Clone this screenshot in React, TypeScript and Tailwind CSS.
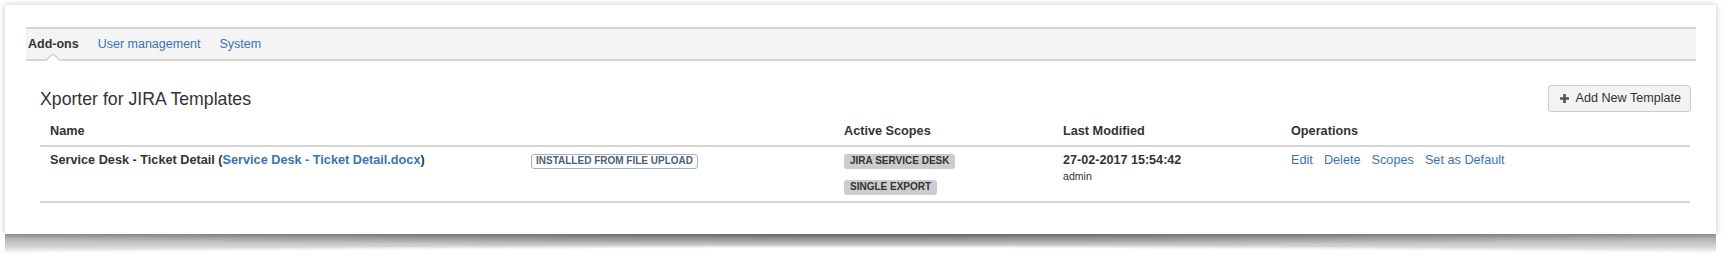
import React from 'react';

const LINK = 'text-[#3b73af]';

const ScopeLozenge = ({ children }: { children: React.ReactNode }) => (
  <div className="flex h-[18px] items-center pt-[2px]">
    <span className="inline-flex h-[15px] items-center rounded-[3px] bg-[#cccccc] px-[6px] text-[10px] font-bold uppercase leading-none text-[#333]">
      {children}
    </span>
  </div>
);

const cols = 'grid grid-cols-[481px_313px_219px_228px_1fr]';

export default function App() {
  return (
    <div className="min-h-screen bg-white pt-[5px] pl-[5px] pr-[14px] font-['Liberation_Sans',Arial,sans-serif] text-[#333]">
      <div className="bg-white pt-[22px] pb-[31px] pl-[21px] pr-[20px] shadow-[0_0_6px_rgba(0,0,0,0.25)]">
        {/* tabs */}
        <div className="relative flex h-[34px] items-center gap-[19px] border-y-2 border-[#d6d6d6] bg-[#f4f4f4] pl-[2px] text-[12.5px]">
          <span className="font-bold text-[#333]">Add-ons</span>
          <span className={LINK}>User management</span>
          <span className={LINK}>System</span>
          <svg className="absolute bottom-[-2px] left-[20px]" width="14" height="8" viewBox="0 0 14 8">
            <polygon points="0.5,8 7,2 13.5,8" fill="#ffffff" />
            <polyline points="0,7 7,1 14,7" fill="none" stroke="#d6d6d6" strokeWidth="1.6" />
          </svg>
        </div>

        <div className="pl-[14px] pr-[5px]">
          <div className="mt-[24px] flex items-center justify-between">
            <h2 className="text-[17.7px] leading-[24px] font-normal text-[#333]">Xporter for JIRA Templates</h2>
            <button
              type="button"
              className="flex h-[27px] items-center gap-[7px] rounded-[3px] border border-[#cccccc] bg-[#f3f3f3] pl-[11px] pr-[9px] text-[12.6px] text-[#333]"
            >
              <svg width="9" height="9" viewBox="0 0 9 9">
                <path d="M3.2 0h2.6v3.2H9v2.6H5.8V9H3.2V5.8H0V3.2h3.2z" fill="#555" />
              </svg>
              Add New Template
            </button>
          </div>

          <div className="mr-[1px] text-[12.7px] leading-[18px]">
            <div className={`${cols} border-b-2 border-[#d6d6d6] pt-[10px] pb-[5px] font-bold`}>
              <div className="pl-[10px]">Name</div>
              <div className="pl-[10px]" />
              <div className="pl-[10px]">Active Scopes</div>
              <div className="pl-[10px]">Last Modified</div>
              <div className="pl-[10px]">Operations</div>
            </div>

            <div className={`${cols} border-b-2 border-[#d6d6d6] pt-[4px] pb-[6px]`}>
              <div className="pl-[10px] font-bold">
                Service Desk - Ticket Detail (<span className={LINK}>Service Desk - Ticket Detail.docx</span>)
              </div>
              <div className="pl-[10px]">
                <div className="flex h-[18px] items-center pt-[2px]">
                  <span className="inline-flex h-[15px] items-center rounded-[3px] border border-[#a9b3bf] px-[4px] text-[10px] font-bold uppercase leading-none text-[#4d5f75]">
                    Installed from file upload
                  </span>
                </div>
              </div>
              <div className="flex flex-col gap-[8px] pl-[10px]">
                <ScopeLozenge>Jira Service Desk</ScopeLozenge>
                <ScopeLozenge>Single Export</ScopeLozenge>
              </div>
              <div className="pl-[10px]">
                <div className="text-[12.6px] font-bold leading-[18px]">27-02-2017 15:54:42</div>
                <div className="text-[10.6px] leading-[14px]">admin</div>
              </div>
              <div className={`flex gap-[11px] pl-[10px] ${LINK}`}>
                <span>Edit</span>
                <span>Delete</span>
                <span>Scopes</span>
                <span>Set as Default</span>
              </div>
            </div>
          </div>
        </div>
      </div>
      {/* curled drop shadow under the screenshot frame */}
      <div className="h-[20px] bg-[radial-gradient(ellipse_55%_12px_at_50%_0%,rgba(0,0,0,0.3),rgba(0,0,0,0)),radial-gradient(ellipse_62%_14px_at_50%_25px,#ffffff_75%,rgba(255,255,255,0)),linear-gradient(to_bottom,rgba(0,0,0,0.36),rgba(0,0,0,0.18)_60%,rgba(0,0,0,0))]" />
    </div>
  );
}
